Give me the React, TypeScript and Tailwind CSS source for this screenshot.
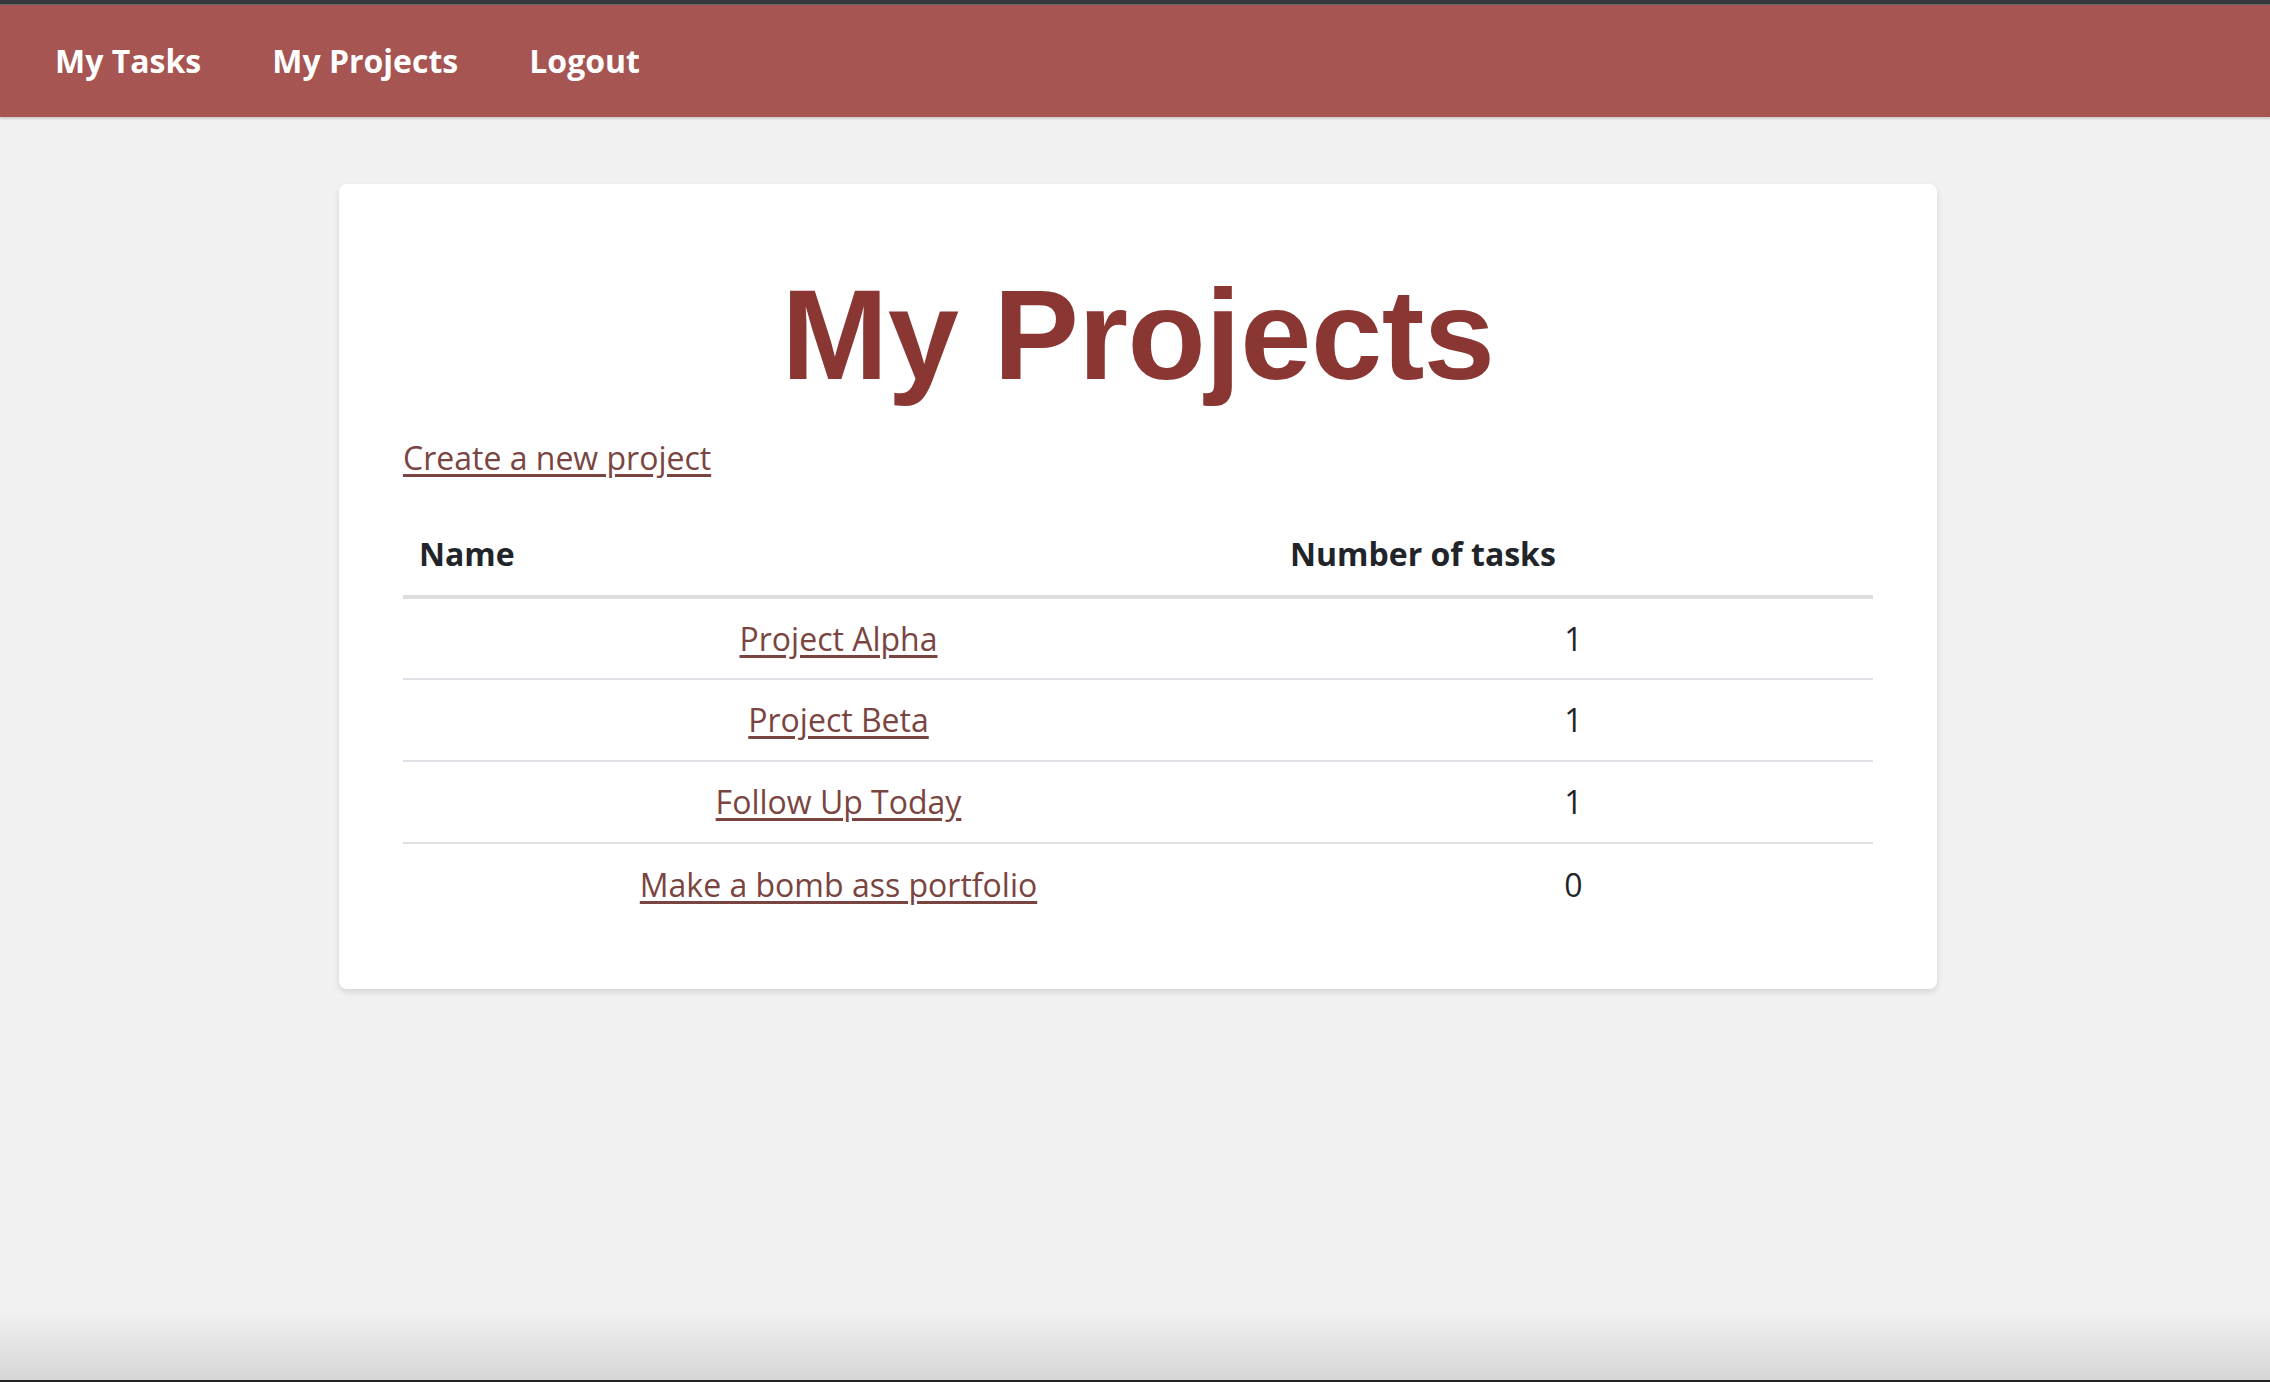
import React from "react";

const projects = [
  { name: "Project Alpha", tasks: 1 },
  { name: "Project Beta", tasks: 1 },
  { name: "Follow Up Today", tasks: 1 },
  { name: "Make a bomb ass portfolio", tasks: 0 },
];

const App: React.FC = () => {
  return (
    <div className="flex min-h-screen flex-col bg-[#f1f1f1] font-['Open_Sans',sans-serif]">
      {/* window chrome strip */}
      <div className="h-[4px] bg-[#36383c]" />
      <div className="h-[1px] bg-[#68686c]" />

      <nav className="flex h-[112px] items-center gap-[71px] bg-[#a65552] pl-[55px] shadow-[0_2px_2px_rgba(0,0,0,0.15)]">
        <a href="#" className="text-[32px] font-bold text-white">
          My Tasks
        </a>
        <a href="#" className="text-[32px] font-bold text-white">
          My Projects
        </a>
        <a href="#" className="text-[32px] font-bold text-white">
          Logout
        </a>
      </nav>

      <main className="flex-1 pt-[67px] pl-[6px]">
        <div className="mx-auto w-[1598px] rounded-lg bg-white px-[64px] pt-[87px] pb-[64px] shadow-[0_3px_6px_rgba(0,0,0,0.12)]">
          <h1 className="text-center font-['Liberation_Sans',Arial,sans-serif] text-[128px] leading-none font-bold tracking-[-0.5px] text-[#8a3633]">
            My Projects
          </h1>

          <a
            href="#"
            className="mt-[35px] inline-block text-[32px] leading-[48px] text-[#7a4541] underline underline-offset-[4px]"
          >
            Create a new project
          </a>

          <table className="mt-[31px] w-full border-collapse text-[32px] text-[#212529]">
            <thead>
              <tr className="border-b-4 border-[#dedede]">
                <th className="h-[84px] w-[871px] pl-4 text-left font-bold">Name</th>
                <th className="h-[84px] pl-4 text-left font-bold">Number of tasks</th>
              </tr>
            </thead>
            <tbody>
              {projects.map((p, i) => (
                <tr
                  key={p.name}
                  className={i < projects.length - 1 ? "border-b-2 border-[#dee2e6]" : ""}
                >
                  <td className="h-[82px] text-center">
                    <a href="#" className="text-[#7a4541] underline underline-offset-[4px]">
                      {p.name}
                    </a>
                  </td>
                  <td className="h-[82px] text-center">{p.tasks}</td>
                </tr>
              ))}
            </tbody>
          </table>
        </div>
      </main>

      {/* bottom window shadow */}
      <div className="h-[70px] bg-linear-to-b from-[#f1f1f1] to-[#d6d6d6]" />
      <div className="h-[2px] bg-[#222]" />
    </div>
  );
};

export default App;
